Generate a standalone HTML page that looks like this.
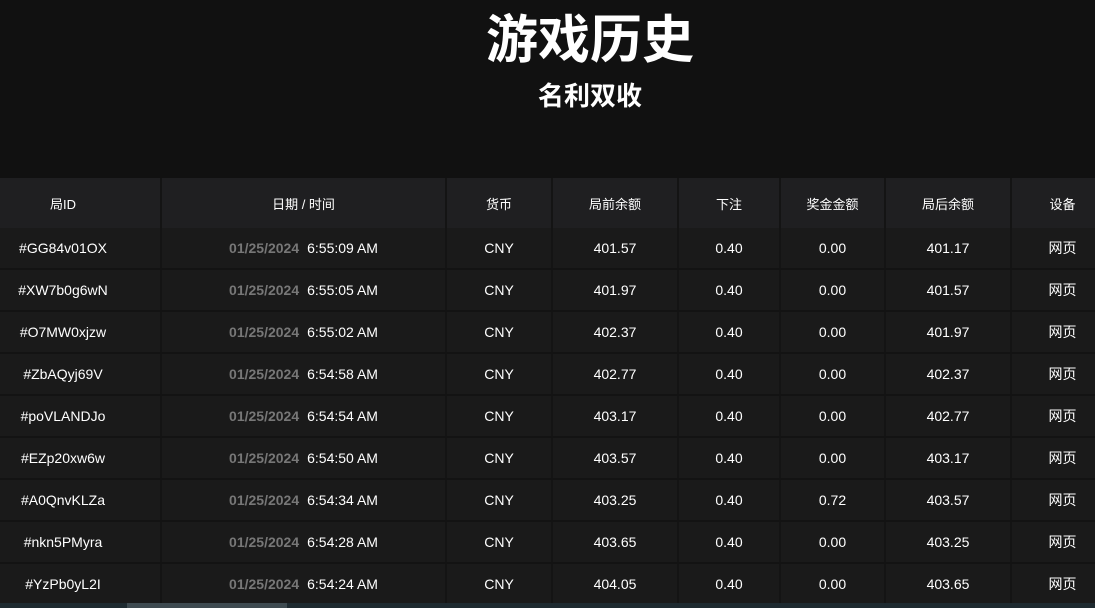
<!DOCTYPE html>
<html><head><meta charset="utf-8"><style>
body{margin:0;width:1095px;height:608px;overflow:hidden;background:#111;font-family:"Liberation Sans","Noto Sans CJK SC",sans-serif;color:#fff;position:relative}
h1{position:absolute;top:10px;left:0;width:1180px;text-align:center;margin:0;font-size:52px;font-weight:bold;line-height:62px}
h2{position:absolute;top:80px;left:0;width:1180px;text-align:center;margin:0;font-size:26px;font-weight:bold;line-height:32px}
table{position:absolute;top:178px;left:0;border-collapse:collapse;table-layout:fixed;width:1095px}
th{height:50px;background:#1f1f21;font-size:13px;font-weight:normal;border-right:2px solid #141414;padding:0}
td{height:40px;background:#1a1a1a;font-size:14px;text-align:center;border-right:2px solid #141414;border-bottom:2px solid #131313;padding:0}
th:first-child,td:first-child{padding-right:34px}
th:last-child,td:last-child{border-right:none;padding-left:18px}
.d{color:#777;font-weight:bold;margin-right:8px}
.sb{position:absolute;left:0;top:603px;width:1095px;height:5px;background:#1e2a30}
.th{position:absolute;left:127px;top:603px;width:160px;height:5px;background:#3e4a50}
</style></head><body>
<h1>游戏历史</h1><h2>名利双收</h2>
<table>
<colgroup><col style="width:161px"><col style="width:285px"><col style="width:106px"><col style="width:126px"><col style="width:102px"><col style="width:105px"><col style="width:126px"><col style="width:84px"></colgroup>
<tr><th>局ID</th><th>日期 / 时间</th><th>货币</th><th>局前余额</th><th>下注</th><th>奖金金额</th><th>局后余额</th><th>设备</th></tr>
<tr><td>#GG84v01OX</td><td><span class="d">01/25/2024</span>6:55:09 AM</td><td>CNY</td><td>401.57</td><td>0.40</td><td>0.00</td><td>401.17</td><td>网页</td></tr>
<tr><td>#XW7b0g6wN</td><td><span class="d">01/25/2024</span>6:55:05 AM</td><td>CNY</td><td>401.97</td><td>0.40</td><td>0.00</td><td>401.57</td><td>网页</td></tr>
<tr><td>#O7MW0xjzw</td><td><span class="d">01/25/2024</span>6:55:02 AM</td><td>CNY</td><td>402.37</td><td>0.40</td><td>0.00</td><td>401.97</td><td>网页</td></tr>
<tr><td>#ZbAQyj69V</td><td><span class="d">01/25/2024</span>6:54:58 AM</td><td>CNY</td><td>402.77</td><td>0.40</td><td>0.00</td><td>402.37</td><td>网页</td></tr>
<tr><td>#poVLANDJo</td><td><span class="d">01/25/2024</span>6:54:54 AM</td><td>CNY</td><td>403.17</td><td>0.40</td><td>0.00</td><td>402.77</td><td>网页</td></tr>
<tr><td>#EZp20xw6w</td><td><span class="d">01/25/2024</span>6:54:50 AM</td><td>CNY</td><td>403.57</td><td>0.40</td><td>0.00</td><td>403.17</td><td>网页</td></tr>
<tr><td>#A0QnvKLZa</td><td><span class="d">01/25/2024</span>6:54:34 AM</td><td>CNY</td><td>403.25</td><td>0.40</td><td>0.72</td><td>403.57</td><td>网页</td></tr>
<tr><td>#nkn5PMyra</td><td><span class="d">01/25/2024</span>6:54:28 AM</td><td>CNY</td><td>403.65</td><td>0.40</td><td>0.00</td><td>403.25</td><td>网页</td></tr>
<tr><td>#YzPb0yL2I</td><td><span class="d">01/25/2024</span>6:54:24 AM</td><td>CNY</td><td>404.05</td><td>0.40</td><td>0.00</td><td>403.65</td><td>网页</td></tr>
</table>
<div class="sb"></div><div class="th"></div>
</body></html>
